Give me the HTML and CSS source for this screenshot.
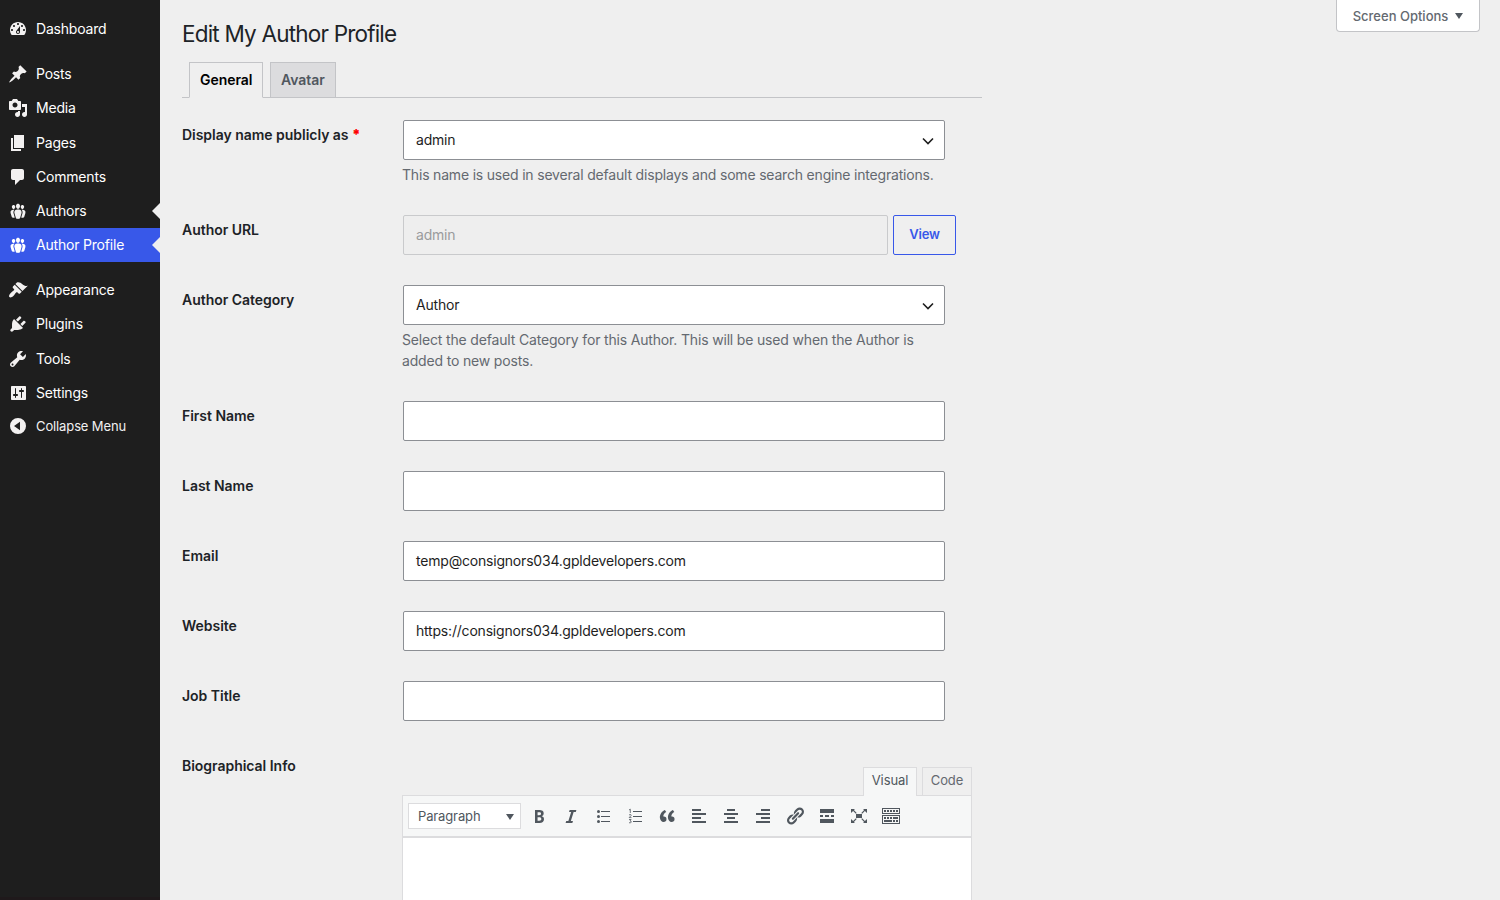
FILE: index.html
```html
<!DOCTYPE html>
<html lang="en">
<head>
<meta charset="utf-8">
<title>Edit My Author Profile</title>
<link rel="stylesheet" href="styles.css">
</head>
<body>
<div class="app">
  <nav class="sidebar">
    <a class="item"><svg class="icon" viewBox="0 0 20 20"><path d="M3.76 16h12.48c1.1-1.37 1.76-3.11 1.76-5 0-4.42-3.58-8-8-8s-8 3.58-8 8c0 1.89.66 3.63 1.76 5zM10 4c.55 0 1 .45 1 1s-.45 1-1 1-1-.45-1-1 .45-1 1-1zM6 6c.55 0 1 .45 1 1s-.45 1-1 1-1-.45-1-1 .45-1 1-1zm8 0c.55 0 1 .45 1 1s-.45 1-1 1-1-.45-1-1 .45-1 1-1zm-5.37 5.55L12 7v6c0 1.1-.9 2-2 2s-2-.9-2-2c0-.57.24-1.08.63-1.45zM4 10c.55 0 1 .45 1 1s-.45 1-1 1-1-.45-1-1 .45-1 1-1zm12 0c.55 0 1 .45 1 1s-.45 1-1 1-1-.45-1-1 .45-1 1-1zm-5 3c0-.55-.45-1-1-1s-1 .45-1 1 .45 1 1 1 1-.45 1-1z"/></svg><span>Dashboard</span></a>
    <div class="gap"></div>
    <a class="item"><svg class="icon" viewBox="0 0 20 20"><path d="M10.44 3.02l1.82-1.82 6.36 6.35-1.83 1.82c-1.05-.68-2.48-.57-3.41.36l-.75.75c-.92.93-1.04 2.35-.35 3.41l-1.83 1.82-2.41-2.41-2.8 2.79c-.42.42-3.38 2.71-3.8 2.29s1.86-3.39 2.28-3.81l2.79-2.79L4.1 9.36l1.83-1.82c1.05.69 2.48.57 3.4-.36l.75-.75c.93-.92 1.05-2.35.36-3.41z"/></svg><span>Posts</span></a>
    <a class="item"><svg class="icon" viewBox="0 0 20 20"><path d="M13 11V4c0-.55-.45-1-1-1h-1.67L9 1H5L3.67 3H2c-.55 0-1 .45-1 1v7c0 .55.45 1 1 1h10c.55 0 1-.45 1-1zM7 4.5c1.38 0 2.5 1.12 2.5 2.5S8.38 9.5 7 9.5 4.5 8.38 4.5 7 5.62 4.5 7 4.5zM14 6h5v10.5c0 1.38-1.12 2.5-2.5 2.5S14 17.88 14 16.5s1.12-2.5 2.5-2.5c.17 0 .34.02.5.05V9h-3V6zm-4 8.05V13h2v3.5c0 1.38-1.12 2.5-2.5 2.5S7 17.88 7 16.5 8.12 14 9.5 14c.17 0 .34.02.5.05z"/></svg><span>Media</span></a>
    <a class="item"><svg class="icon" viewBox="0 0 20 20"><path d="M6 15V2h10v13H6zm-1 1h8v2H3V5h2v11z"/></svg><span>Pages</span></a>
    <a class="item"><svg class="icon" viewBox="0 0 20 20"><path d="M5 2h9c1.1 0 2 .9 2 2v7c0 1.1-.9 2-2 2h-2l-5 5v-5H5c-1.1 0-2-.9-2-2V4c0-1.1.9-2 2-2z"/></svg><span>Comments</span></a>
    <a class="item pointed"><svg class="icon" viewBox="0 0 20 20"><path id="people" d="M8.03 4.46c-.29 1.28.55 3.46 1.97 3.46 1.41 0 2.25-2.18 1.96-3.46-.22-.98-1.08-1.63-1.96-1.63-.89 0-1.74.65-1.97 1.63zm-4.13.9c-.25 1.08.47 2.93 1.67 2.93s1.92-1.85 1.67-2.93c-.19-.83-.92-1.39-1.67-1.39s-1.48.56-1.67 1.39zm8.86 0c-.25 1.08.47 2.93 1.66 2.93 1.2 0 1.92-1.85 1.67-2.93-.19-.83-.92-1.39-1.67-1.39-.74 0-1.47.56-1.66 1.39zm-.59 11.43l1.25-4.3C14.2 10 12.71 8.47 10 8.47c-2.72 0-4.21 1.53-3.44 4.02l1.26 4.3C8.05 17.51 9 18 10 18c.98 0 1.94-.49 2.17-1.21zm-6.1-7.63c-.49.67-.96 1.83-.42 3.59l1.12 3.79c-.34.2-.77.31-1.2.31-.85 0-1.65-.41-1.85-1.03l-1.07-3.65c-.65-2.11.61-3.4 2.92-3.4.27 0 .54.02.79.06-.1.1-.2.22-.29.33zm8.35-.39c2.31 0 3.58 1.29 2.92 3.4l-1.07 3.65c-.2.62-1 1.03-1.85 1.03-.43 0-.86-.11-1.2-.31l1.11-3.77c.55-1.78.08-2.94-.42-3.61-.08-.11-.18-.23-.28-.33.25-.04.51-.06.79-.06z"/></svg><span>Authors</span></a>
    <a class="item pointed active"><svg class="icon" viewBox="0 0 20 20"><use href="#people"/></svg><span>Author Profile</span></a>
    <div class="gap"></div>
    <a class="item"><svg class="icon" viewBox="0 0 20 20"><path d="M14.48 11.06L7.41 3.99l1.5-1.5c.5-.56 2.3-.47 3.51.32 1.21.8 1.43 1.28 2.91 2.1 1.18.64 2.45 1.26 4.45.85zm-.71.71L6.7 4.7 4.93 6.47c-.39.39-.39 1.02 0 1.41l1.06 1.06c.39.39.39 1.03 0 1.42-.6.6-1.43 1.11-2.21 1.69-.35.26-.7.53-1.01.84C1.43 14.23.4 16.08 1.4 17.07c.99 1 2.84-.03 4.18-1.36.31-.31.58-.66.85-1.02.57-.78 1.08-1.61 1.69-2.21.39-.39 1.02-.39 1.41 0l1.06 1.06c.39.39 1.02.39 1.41 0z"/></svg><span>Appearance</span></a>
    <a class="item"><svg class="icon" viewBox="0 0 20 20"><path d="M13.11 4.36L9.87 7.6 8 5.73l3.24-3.24c.35-.34 1.05-.2 1.56.32.52.51.66 1.21.31 1.55zm-8 1.77l.91-1.12 9.01 9.01-1.19.84c-.71.71-2.63 1.16-3.82 1.16H6.14L4.9 17.26c-.59.59-1.54.59-2.12 0-.59-.58-.59-1.53 0-2.12l1.24-1.24v-3.88c0-1.13.4-3.19 1.09-3.89zm7.26 3.97l3.24-3.24c.34-.35 1.04-.21 1.55.31.52.51.66 1.21.31 1.55l-3.24 3.25z"/></svg><span>Plugins</span></a>
    <a class="item"><svg class="icon" viewBox="0 0 20 20"><path d="M16.68 9.77c-1.34 1.34-3.3 1.67-4.95.99l-5.41 6.52c-.99.99-2.59.99-3.58 0s-.99-2.59 0-3.57l6.52-5.42c-.68-1.65-.35-3.61.99-4.95 1.28-1.28 3.12-1.62 4.72-1.06l-2.89 2.89 2.82 2.82 2.86-2.87c.53 1.58.18 3.39-1.08 4.65zM3.81 16.21c.4.39 1.04.39 1.43 0 .4-.4.4-1.04 0-1.43-.39-.4-1.03-.4-1.43 0-.39.39-.39 1.03 0 1.43z"/></svg><span>Tools</span></a>
    <a class="item"><svg class="icon" viewBox="0 0 20 20"><path d="M18 16V4c0-.55-.45-1-1-1H4c-.55 0-1 .45-1 1v12c0 .55.45 1 1 1h13c.55 0 1-.45 1-1zM8 11h1c.55 0 1 .45 1 1s-.45 1-1 1H8v1.5c0 .28-.22.5-.5.5s-.5-.22-.5-.5V13H6c-.55 0-1-.45-1-1s.45-1 1-1h1V5.5c0-.28.22-.5.5-.5s.5.22.5.5V11zm5-2h-1c-.55 0-1-.45-1-1s.45-1 1-1h1V5.500c0-.28.22-.5.5-.5s.5.22.5.5V7h1c.55 0 1 .45 1 1s-.45 1-1 1h-1v5.5c0 .28-.22.5-.5.5s-.5-.22-.5-.5V9z"/></svg><span>Settings</span></a>
    <a class="item collapse"><svg class="icon" viewBox="0 0 20 20"><path fill-rule="evenodd" d="M10 2a8 8 0 1 1 0 16a8 8 0 1 1 0-16zM12 5.700v8.600L6 10z"/></svg><span>Collapse Menu</span></a>
  </nav>
  <main class="main">
    <div class="screen-options">Screen Options<svg class="tri" viewBox="0 0 8 6"><path d="M0 0h8L4 6z"/></svg></div>
    <h1 class="title">Edit My Author Profile</h1>
    <div class="tabs"><a class="tab current">General</a><a class="tab">Avatar</a></div>
    <form class="form">
      <div class="row r-name"><label class="label">Display name publicly as <b class="req">*</b></label>
        <div class="field"><div class="control select"><span>admin</span><svg class="chev" viewBox="0 0 12 8"><path d="M1 1.500l5 5 5-5"/></svg></div><p class="hint">This name is used in several default displays and some search engine integrations.</p></div></div>
      <div class="row r-url"><label class="label">Author URL</label>
        <div class="field inline"><div class="control disabled">admin</div><a class="view">View</a></div></div>
      <div class="row r-cat"><label class="label">Author Category</label>
        <div class="field"><div class="control select"><span>Author</span><svg class="chev" viewBox="0 0 12 8"><path d="M1 1.500l5 5 5-5"/></svg></div><p class="hint wide">Select the default Category for this Author. This will be used when the Author is<br>added to new posts.</p></div></div>
      <div class="row"><label class="label">First Name</label><div class="field"><div class="control"></div></div></div>
      <div class="row"><label class="label">Last Name</label><div class="field"><div class="control"></div></div></div>
      <div class="row"><label class="label">Email</label><div class="field"><div class="control">temp@consignors034.gpldevelopers.com</div></div></div>
      <div class="row"><label class="label">Website</label><div class="field"><div class="control">https://consignors034.gpldevelopers.com</div></div></div>
      <div class="row"><label class="label">Job Title</label><div class="field"><div class="control"></div></div></div>
      <div class="row bio"><label class="label">Biographical Info</label>
        <div class="editor">
          <div class="modes"><a class="mode on">Visual</a><a class="mode">Code</a></div>
          <div class="pane">
            <div class="toolbar">
              <div class="format"><span>Paragraph</span><svg class="tri" viewBox="0 0 8 6"><path d="M0 0h8L4 6z"/></svg></div>
              <div class="tools">
                <svg class="tool" viewBox="0 0 20 20"><path d="M6 4v13h4.540c1.370 0 2.460-.33 3.260-1 .8-.66 1.200-1.580 1.200-2.770 0-.84-.17-1.510-.51-2.010s-.9-.85-1.670-1.030v-.09c.57-.1 1.020-.4 1.360-.9s.51-1.130.51-1.910c0-1.140-.39-1.980-1.170-2.500C12.750 4.260 11.500 4 9.780 4H6zm2.570 5.150V6.260h1.360c.73 0 1.270.11 1.610.32.34.22.51.58.51 1.070 0 .54-.16.92-.47 1.150s-.82.35-1.510.35h-1.500zm0 2.190h1.600c1.440 0 2.160.53 2.160 1.610 0 .6-.17 1.050-.51 1.340s-.86.43-1.570.43H8.570v-3.380z"/></svg>
                <svg class="tool" viewBox="0 0 20 20"><path d="M14.780 6h-2.130l-2.800 9h2.120l-.62 2H4.600l.62-2h2.140l2.800-9H8.030l.62-2h6.750z"/></svg>
                <svg class="tool" viewBox="0 0 20 20"><path d="M8 5h9v1H8zM8 10h9v1H8zM8 15h9v1H8z"/><circle cx="5.500" cy="5.500" r="1.500"/><circle cx="5.500" cy="10.500" r="1.500"/><circle cx="5.500" cy="15.500" r="1.500"/></svg>
                <svg class="tool" viewBox="0 0 20 20"><path d="M8 5h9v1H8zM8 10h9v1H8zM8 15h9v1H8z"/><path class="numeral" d="M4 4l1.300-.8V7M4 8.900q2.400-1 2.200.5L4.200 11.600h2.300M4 13.500h2.100L5 14.800q1.500 0 1.200 1.300t-2.200.6"/></svg>
                <svg class="tool" viewBox="0 0 20 20"><path d="M9.490 13.220c0-.74-.2-1.380-.61-1.900-.62-.78-1.830-.88-2.530-.72-.29-1.650 1.110-3.750 2.920-4.650L7.880 4c-2.730 1.300-5.420 4.280-4.960 8.050C3.210 14.430 4.590 16 6.540 16c.85 0 1.560-.25 2.120-.75s.83-1.180.83-2.030zm8.050 0c0-.74-.2-1.380-.61-1.900-.63-.78-1.830-.88-2.530-.72-.29-1.650 1.110-3.750 2.920-4.650L15.930 4c-2.730 1.300-5.410 4.280-4.950 8.050.29 2.380 1.660 3.950 3.610 3.950.85 0 1.560-.25 2.120-.75s.83-1.180.83-2.030z"/></svg>
                <svg class="tool" viewBox="0 0 20 20"><path d="M12 5V3H3v2h9zm5 4V7H3v2h14zm-5 4v-2H3v2h9zm5 4v-2H3v2h14z"/></svg>
                <svg class="tool" viewBox="0 0 20 20"><path d="M14 5V3H6v2h8zm3 4V7H3v2h14zm-3 4v-2H6v2h8zm3 4v-2H3v2h14z"/></svg>
                <svg class="tool" viewBox="0 0 20 20"><path d="M17 5V3H8v2h9zm0 4V7H3v2h14zm0 4v-2H8v2h9zm0 4v-2H3v2h14z"/></svg>
                <svg class="tool" viewBox="0 0 20 20"><path d="M17.740 2.760c1.680 1.690 1.680 4.410 0 6.100l-1.530 1.520c-1.120 1.120-2.700 1.470-4.140 1.090l2.620-2.610.76-.77.76-.76c.84-.84.84-2.200 0-3.040-.84-.85-2.200-.85-3.040 0l-.77.76-3.380 3.380c-.37-1.440-.02-3.020 1.100-4.140l1.520-1.530c1.690-1.680 4.420-1.680 6.100 0zM8.590 13.430l5.340-5.340c.42-.42.42-1.100 0-1.520-.44-.43-1.130-.39-1.530 0l-5.330 5.340c-.42.42-.42 1.100 0 1.520.44.43 1.130.39 1.520 0zm-.76 2.290l4.140-4.150c.38 1.440.03 3.020-1.090 4.140l-1.520 1.530c-1.690 1.680-4.410 1.680-6.100 0-1.680-1.680-1.680-4.420 0-6.100l1.530-1.520c1.120-1.120 2.700-1.470 4.140-1.100l-4.140 4.150c-.85.84-.85 2.200 0 3.050.84.84 2.200.84 3.040 0z"/></svg>
                <svg class="tool" viewBox="0 0 20 20"><path d="M17 7V3H3v4h14zM6 11V9H3v2h3zm6 0V9H8v2h4zm5 0V9h-3v2h3zm0 6v-4H3v4h14z"/></svg>
                <svg class="tool" viewBox="0 0 20 20"><path d="M7 8h6v4H7zM2 3h4L4.900 4.100l2.800 2.800-.8.8-2.800-2.800L2 7zM18 3v4l-2.100-2.100-2.800 2.800-.8-.8 2.800-2.800L14 3zM2 17v-4l2.100 2.100 2.800-2.800.8.8-2.800 2.800L6 17zM18 17h-4l1.100-1.100-2.800-2.800.8-.8 2.800 2.800L18 13z"/></svg>
                <svg class="tool" viewBox="0 0 20 20"><path fill-rule="evenodd" d="M1 2h18v6H1zM2 3v4h16V3zM1 9h18v9H1zM2 10v7h16v-7z"/><path d="M3 4h2v2H3zM6 4h2v2H6zM9 4h2v2H9zM12 4h2v2h-2zM15 4h2v2h-2zM3 11h2v2H3zM6 11h2v2H6zM9 11h2v2H9zM12 11h5v2h-5zM3 14h8v2H3zM12 14h2v2h-2zM15 14h2v2h-2z"/></svg>
              </div>
            </div>
          </div>
        </div></div>
    </form>
  </main>
</div>
</body>
</html>
```
FILE: styles.css
```css
* { box-sizing: border-box; }
body { margin: 0; background: #efefef; color: #1d2327; font: 14px/20px Inter, sans-serif; letter-spacing: -0.2px; overflow: hidden; }
.app { display: flex; height: 900px; overflow: hidden; }
.sidebar { width: 160px; flex: none; background: #1e1e1e; padding-top: 12.2px; border-bottom: 3px solid #1f191b; }
.item { display: flex; align-items: center; height: 34.2px; padding-left: 8px; gap: 8px; color: #fff; position: relative; }
.gap { height: 10.8px; }
.icon { width: 20px; height: 20px; fill: #f3f1f1; }
.active { background: #3858e9; }
.active .icon { fill: #fff; }
.pointed::after { content: ""; position: absolute; right: 0; top: 9px; border: solid transparent; border-width: 8px 8px 8px 0; border-right-color: #efefef; }
.collapse { height: 33px; font-size: 13px; color: #f0f0f1; letter-spacing: -0.12px; }
.main { flex: 1; padding-left: 22px; position: relative; }
.screen-options { position: absolute; right: 20px; top: 0; width: 144px; height: 32px; padding-top: 1px; background: #fff; border: 1px solid #c3c4c7; border-top: 0; border-radius: 0 0 4px 4px; display: flex; align-items: center; justify-content: center; gap: 7px; font-size: 13px; font-weight: 500; color: #646970; letter-spacing: 0; }
.tri { width: 8px; height: 6px; fill: #50575e; }
.title { margin: 0; padding-top: 19px; height: 62px; font-size: 22.5px; line-height: 30px; font-weight: 400; letter-spacing: -0.8px; }
.tabs { width: 800px; height: 36px; border-bottom: 1px solid #c3c4c7; display: flex; gap: 7px; padding-left: 7px; }
.tab { height: 36px; border: 1px solid #c3c4c7; background: #dcdcde; color: #50575e; font-weight: 600; padding: 7px 10px; line-height: 20px; letter-spacing: -0.05px; width: 66px; }
.current { width: 74px; background: #efefef; border-bottom-color: #efefef; color: #000; }
.form { padding-top: 22px; }
.row { display: flex; height: 70px; }
.r-name { height: 95px; }
.r-cat { height: 116px; }
.label { width: 221px; flex: none; padding-top: 5px; font-weight: 600; letter-spacing: -0.03px; }
.req { color: red; }
.control { width: 542px; height: 40px; border: 1px solid #8c8f94; border-radius: 2px; background: #fff; padding: 0 12px; display: flex; align-items: center; color: #1e1e1e; }
.select { justify-content: space-between; padding-right: 10px; }
.chev { width: 12px; height: 8px; margin-top: 1px; fill: none; stroke: #1e1e1e; stroke-width: 1.6; }
.hint { margin: 4px 0 0 -1px; line-height: 21px; color: #646970; white-space: nowrap; letter-spacing: -0.19px; }
.wide { letter-spacing: -0.17px; }
.inline { display: flex; gap: 5px; }
.disabled { width: 485px; background: #eeeeee; border-color: #c9cacc; color: #9a9b9d; }
.view { width: 63px; height: 40px; border: 1px solid #3858e9; border-radius: 2px; color: #3858e9; font-size: 13px; font-weight: 600; line-height: 37px; text-align: center; }
.editor { width: 570px; margin-left: -1px; padding-top: 16px; }
.modes { display: flex; justify-content: flex-end; gap: 5px; height: 29px; position: relative; }
.mode { width: 50px; height: 28px; border: 1px solid #dcdcde; border-bottom: 0; background: #efefef; color: #646970; font-size: 13px; line-height: 25px; text-align: center; letter-spacing: -0.1px; }
.on { width: 54px; height: 29px; background: #f6f7f7; color: #50575e; }
.pane { margin-top: -1px; height: 160px; border: 1px solid #dcdcde; background: #fff; }
.toolbar { height: 42px; border-bottom: 2px solid #dcdcde; background: #f6f7f7; display: flex; align-items: center; padding-left: 5px; gap: 8px; }
.format { width: 113px; height: 26px; border: 1px solid #dcdcde; background: #fff; display: flex; align-items: center; justify-content: space-between; padding: 0 6px 0 9px; color: #50575e; font-size: 13px; letter-spacing: -0.13px; }
.format .tri { margin-top: 1px; }
.tools { display: flex; gap: 12px; }
.tool { width: 20px; height: 20px; fill: #50575e; }
.numeral { fill: none; stroke: #50575e; stroke-width: 0.8; }
```
